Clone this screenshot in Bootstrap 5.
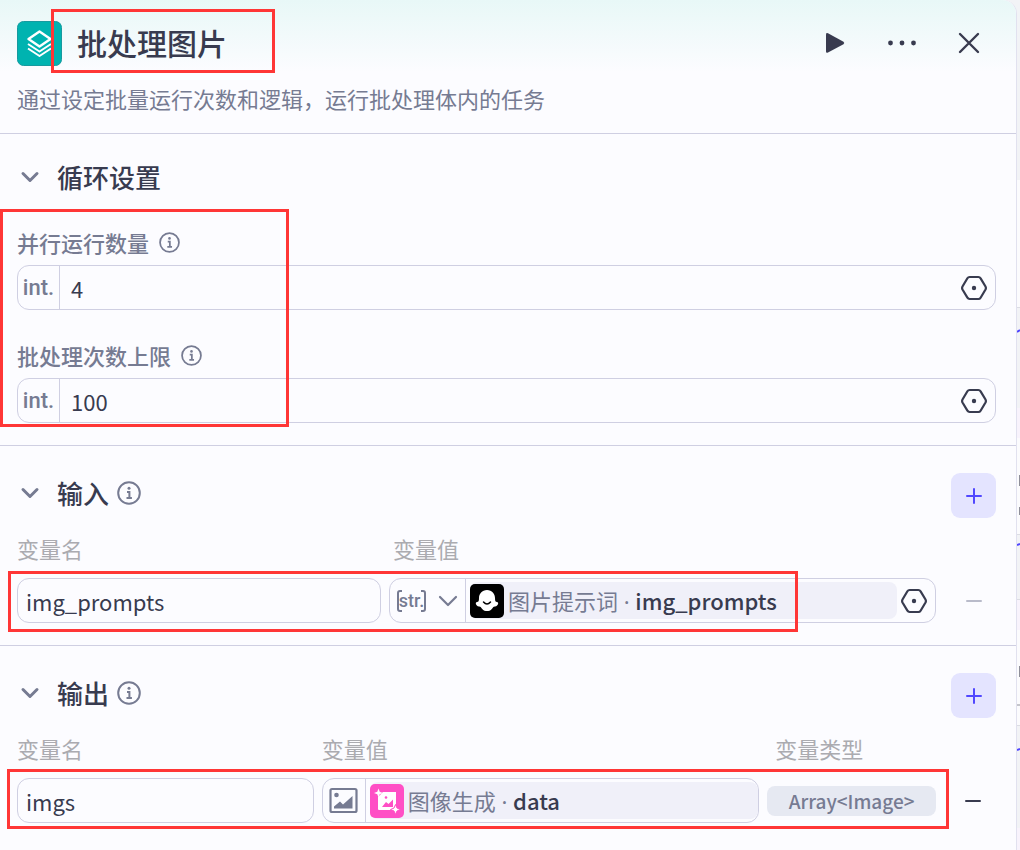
<!DOCTYPE html>
<html lang="zh-CN">
<head>
<meta charset="utf-8">
<meta name="viewport" content="width=device-width, initial-scale=1">
<title>批处理图片</title>
<link href="https://cdn.jsdelivr.net/npm/bootstrap@5.3.0/dist/css/bootstrap.min.css" rel="stylesheet">
<style>
:root{--ink:#383b4f;--muted:#767b92;--line:#cfcfe2;--soft:#f0f0f9;--mark:#ff3636;--accent:#5147ff}
body{font-family:"Noto Sans CJK SC",sans-serif;color:var(--ink);background:#f2f3f6;font-size:22px;line-height:32px}
.panel{background:#fcfcff;border-right:1px solid #e1e1ef;border-radius:0 14px 0 0;min-width:0}
.canvas-strip{width:3px}
.panel-head{background:linear-gradient(#e8f8f7,#fcfcff 72px);border-radius:0 14px 0 0;padding:20px 20px 19px 17px;border-bottom:1px solid var(--line)}
.node-logo{width:46px;height:46px}
.head-title{font-size:30px;line-height:44px;font-weight:500;margin-left:14px}
.head-tools{gap:22px;padding-right:5px}
.head-tools .icon-btn{width:45px;height:45px}
.desc{color:var(--muted);margin-top:16px}
.icon-btn{border:0;background:none;padding:0;display:flex;align-items:center;justify-content:center;color:inherit}
.block{padding:23px 20px 22px 17px}
.block + .block{border-top:1px solid var(--line);padding-top:27px}
.fold{gap:14px}
.fold-btn{height:40px}
.sec-title{font-size:26px;line-height:40px;font-weight:500}
.field-head{margin-top:29px;margin-bottom:7px;gap:10px}
.field-label{color:var(--muted);font-weight:500}
.col-label{color:#ababb0}
.cols{margin-top:14px}
.box{height:45px;border:1px solid var(--line);border-radius:12px;background:#fcfcff;display:flex;align-items:center;min-width:0}
.box input,input.box{color:var(--ink);font-size:22px;outline:0;min-width:0}
.box input{border:0;background:none;padding:1px 11px 0}
input.box{padding:1px 8px 0}
.type-tag{font-family:Roboto,"Liberation Sans",sans-serif;font-size:22px;font-weight:500;color:var(--muted);width:42px;border-right:1px solid var(--line);height:100%}
.str-btn{font-family:Roboto,"Liberation Sans",sans-serif;font-size:18px;font-weight:500;color:var(--muted);width:76px;height:100%;border-right:1px solid var(--line);gap:12px}
.bracketed{position:relative;width:29px;height:22px;line-height:22px;text-align:center}
.bracketed svg{position:absolute;inset:0}
.add-btn,.drop-btn{width:45px;height:45px;border-radius:9px}
.add-btn{background:#e4e4ff;color:var(--accent)}
.drop-btn{justify-self:end}
.drop-btn:disabled{color:#b9bbca}
.value-chip{height:37px;background:var(--soft);border-radius:8px;min-width:0;color:var(--muted)}
.value-chip b{font-weight:500;color:var(--ink)}
.dot-sep{font-family:"Noto Sans",sans-serif;white-space:pre}
.array-tag{height:30px;border-radius:8px;background:#e6e9f2;color:var(--muted);font-size:19px;font-weight:500;line-height:30px}
.in-grid,.out-grid{display:grid;column-gap:8px}
.in-grid{grid-template-columns:364fr 547fr 52px}
.out-grid{grid-template-columns:297fr 438fr 169fr 52px}
.outline-mark{position:absolute;border:3px solid var(--mark);pointer-events:none;z-index:2}
.mk-title{left:51px;top:9px;width:224px;height:64px}
.mk-loop{left:0;top:75px;width:289px;height:218px}
.mk-in{left:8px;top:125px;right:218px;height:61px}
.mk-out{left:7px;top:123px;right:67px;height:60px}
</style>
</head>
<body>
<svg class="d-none">
<symbol id="chev" viewBox="0 0 26 26"><path d="M6 9.500l7 7 7-7" fill="none" stroke="#767b92" stroke-width="3" stroke-linecap="round" stroke-linejoin="round"/></symbol>
<symbol id="info" viewBox="0 0 24 24"><circle cx="12" cy="12" r="10.800" fill="none" stroke="#767b92" stroke-width="2"/><circle cx="12" cy="7.300" r="1.500" fill="#767b92"/><path d="M10 11h2.400v6M9.500 17h5.400" fill="none" stroke="#767b92" stroke-width="2"/></symbol>
<symbol id="hex" viewBox="0 0 26 26"><path d="M8.600 2h8.800q1.400 0 2.200 1.300l4.900 8.200q.8 1.500 0 3l-4.900 8.200q-.8 1.300-2.200 1.300H8.600q-1.400 0-2.200-1.300l-4.900-8.200q-.8-1.500 0-3l4.900-8.200Q7.200 2 8.600 2z" fill="none" stroke="#383b4f" stroke-width="2.200"/><circle cx="13" cy="13" r="2.200" fill="#383b4f"/></symbol>
<symbol id="plus" viewBox="0 0 16 16"><path d="M1 8h14M8 1v14" fill="none" stroke="currentColor" stroke-width="2" stroke-linecap="round"/></symbol>
<symbol id="minus" viewBox="0 0 16 16"><path d="M1 8h14" fill="none" stroke="currentColor" stroke-width="2" stroke-linecap="round"/></symbol>
</svg>
<div class="d-flex min-vh-100">
<main class="panel flex-grow-1">
<header class="panel-head position-relative">
  <div class="d-flex align-items-start">
    <svg class="node-logo" viewBox="0 0 46 46"><rect x=".5" y="1.500" width="44" height="44" rx="6" fill="#00b3b0" stroke="#179a9f"/><g fill="none" stroke="#fff" stroke-width="2.400" stroke-linejoin="round"><path d="M22.500 11.500l11 7.500-11 7.500-11-7.500z"/><path d="M11 24l11.500 7.500L34 24M11 28.500L22.500 36 34 28.500" stroke-width="2"/></g></svg>
    <h1 class="head-title mb-0 me-auto">批处理图片</h1>
    <div class="d-flex align-items-center head-tools">
      <button class="icon-btn" aria-label="运行"><svg width="20" height="22" viewBox="0 0 20 22"><path d="M1 2.500V19.500Q1 21.500 3 20.500L18.500 12.200Q20 11 18.500 9.800L3 1.200Q1 .500 1 2.500z" fill="#383b4f"/></svg></button>
      <button class="icon-btn" aria-label="更多"><svg width="30" height="6" viewBox="0 0 30 6"><g fill="#383b4f"><circle cx="3.500" cy="3" r="2.400"/><circle cx="15" cy="3" r="2.400"/><circle cx="26.500" cy="3" r="2.400"/></g></svg></button>
      <button class="icon-btn" aria-label="关闭"><svg width="22" height="22" viewBox="0 0 22 22"><path d="M2 2l18 18M20 2L2 20" stroke="#383b4f" stroke-width="2.400" stroke-linecap="round"/></svg></button>
    </div>
  </div>
  <p class="desc mb-0">通过设定批量运行次数和逻辑，运行批处理体内的任务</p>
  <div class="outline-mark mk-title"></div>
</header>

<section class="block position-relative">
  <div class="d-flex align-items-start fold"><button class="icon-btn fold-btn" aria-label="折叠"><svg width="26" height="26"><use href="#chev"/></svg></button><h2 class="sec-title mb-0">循环设置</h2></div>
  <div class="d-flex align-items-center field-head"><label class="field-label" for="par">并行运行数量</label><svg width="21" height="21"><use href="#info"/></svg></div>
  <div class="box"><span class="type-tag d-flex align-items-center justify-content-center">int.</span><input id="par" class="flex-grow-1" value="4"><button class="icon-btn me-2" aria-label="引用变量"><svg width="26" height="26"><use href="#hex"/></svg></button></div>
  <div class="d-flex align-items-center field-head"><label class="field-label" for="lim">批处理次数上限</label><svg width="21" height="21"><use href="#info"/></svg></div>
  <div class="box"><span class="type-tag d-flex align-items-center justify-content-center">int.</span><input id="lim" class="flex-grow-1" value="100"><button class="icon-btn me-2" aria-label="引用变量"><svg width="26" height="26"><use href="#hex"/></svg></button></div>
  <div class="outline-mark mk-loop"></div>
</section>

<section class="block position-relative">
  <div class="d-flex align-items-start fold"><button class="icon-btn fold-btn" aria-label="折叠"><svg width="26" height="26"><use href="#chev"/></svg></button><div class="d-flex align-items-center gap-2"><h2 class="sec-title mb-0">输入</h2><svg width="24" height="24"><use href="#info"/></svg></div><button class="icon-btn add-btn ms-auto" aria-label="添加输入"><svg width="16" height="16"><use href="#plus"/></svg></button></div>
  <div class="in-grid cols"><label class="col-label" for="inname">变量名</label><span class="col-label ps-1">变量值</span></div>
  <div class="in-grid cols align-items-center">
    <input id="inname" class="box w-100" value="img_prompts">
    <div class="box">
      <button class="icon-btn str-btn" aria-label="字符串类型"><span class="bracketed"><svg width="29" height="22" viewBox="0 0 29 22"><path d="M5 1H3Q1 1 1 3v16q0 2 2 2h2M24 1h2q2 0 2 2v16q0 2-2 2h-2" fill="none" stroke="#767b92" stroke-width="2"/></svg>str.</span><svg width="20" height="12" viewBox="0 0 20 12"><path d="M2 2l8 8 8-8" fill="none" stroke="#767b92" stroke-width="2.200" stroke-linecap="round" stroke-linejoin="round"/></svg></button>
      <div class="value-chip flex-grow-1 d-flex align-items-center mx-1"><svg width="34" height="34" viewBox="0 0 34 34"><rect width="34" height="34" rx="5"/><path d="M17 6c5 0 8 4 8 8 0 3 .5 4 2 4 2 0 1.500 4-2 4.500-2 .3-2 1-3 2.300C20.500 27 18.500 27 17 27s-3.500 0-5-2.200c-1-1.300-1-2-3-2.300C5.500 22 5 18 7 18c1.500 0 2-1 2-4 0-4 3-8 8-8z" fill="#fff"/><path d="M13.500 18q3.500 4 7 0" fill="none" stroke="#000" stroke-width="1.500" stroke-linecap="round"/></svg><span class="ms-1 text-nowrap">图片提示词<span class="dot-sep"> · </span><b>img_prompts</b></span></div>
      <button class="icon-btn me-2" aria-label="引用变量"><svg width="26" height="26"><use href="#hex"/></svg></button>
    </div>
    <button class="icon-btn drop-btn" aria-label="删除" disabled><svg width="16" height="16"><use href="#minus"/></svg></button>
  </div>
  <div class="outline-mark mk-in"></div>
</section>

<section class="block position-relative">
  <div class="d-flex align-items-start fold"><button class="icon-btn fold-btn" aria-label="折叠"><svg width="26" height="26"><use href="#chev"/></svg></button><div class="d-flex align-items-center gap-2"><h2 class="sec-title mb-0">输出</h2><svg width="24" height="24"><use href="#info"/></svg></div><button class="icon-btn add-btn ms-auto" aria-label="添加输出"><svg width="16" height="16"><use href="#plus"/></svg></button></div>
  <div class="out-grid cols"><label class="col-label" for="outname">变量名</label><span class="col-label">变量值</span><span class="col-label ps-2">变量类型</span></div>
  <div class="out-grid cols align-items-center">
    <input id="outname" class="box w-100" value="imgs">
    <div class="box">
      <svg width="43" height="43" viewBox="0 0 43 43"><rect x="7.500" y="10" width="26" height="23" rx="1.500" fill="none" stroke="#767b92" stroke-width="2.200"/><circle cx="13.500" cy="16" r="2.300" fill="#767b92"/><path d="M11 29.500v-2l6-5 3 3 9.500-8.500v12.500z" fill="#767b92"/><path d="M42.500 0v43" stroke="#cfcfe2"/></svg>
      <div class="value-chip flex-grow-1 d-flex align-items-center ms-1"><svg width="34" height="34" viewBox="0 0 34 34"><rect width="34" height="34" rx="5" fill="#ff4fc5"/><path d="M13 8h13v13.500l-3.500 4.500H9q-1 0-1-1V13z" fill="#fff"/><path d="M12 23l4-5 2.500 2L23 15.500V23z" fill="#ff4fc5"/><circle cx="16" cy="13.500" r="1.300" fill="#ff4fc5"/><path d="M8.500 4.500l1.200 3.300L13 9l-3.300 1.200-1.200 3.300-1.200-3.300L4 9l3.300-1.200z" fill="#fff"/><path d="M25.500 20.500l1.500 3.500 3.500 1.500L27 27l-1.500 3.500L24 27l-3.500-1.500L24 24z" fill="#fff" stroke="#ff4fc5"/></svg><span class="ms-1 text-nowrap">图像生成<span class="dot-sep"> · </span><b>data</b></span></div>
    </div>
    <span class="array-tag text-center">Array&lt;Image&gt;</span>
    <button class="icon-btn drop-btn" aria-label="删除"><svg width="16" height="16"><use href="#minus"/></svg></button>
  </div>
  <div class="outline-mark mk-out"></div>
</section>
</main>
<div class="canvas-strip"><svg class="d-block" width="3" height="850" viewBox="0 0 3 850"><g fill="#fbfbfd"><path d="M0 180h3v127H0z"/><path d="M0 408h3v126H0z"/><path d="M0 600h3v125H0z"/><path d="M0 828h3v22H0z"/></g><g fill="#f8f3fc"><path d="M0 408h3v30H0zM0 600h3v30H0zM0 828h3v22H0z"/></g><path d="M0 307.500h3M0 534.500h3M0 599.500h3M0 725.500h3" stroke="#dcdde4"/><path d="M0 332l3-2M0 545l3-1M0 750l3-1" stroke="#5147ff" stroke-width="2"/><path d="M2.500 475v11M2.500 507v8M2.500 666v11M0 705h3" stroke="#8e8f99"/></svg></div>
</div>
<script src="https://cdn.jsdelivr.net/npm/bootstrap@5.3.0/dist/js/bootstrap.bundle.min.js"></script>
</body>
</html>
